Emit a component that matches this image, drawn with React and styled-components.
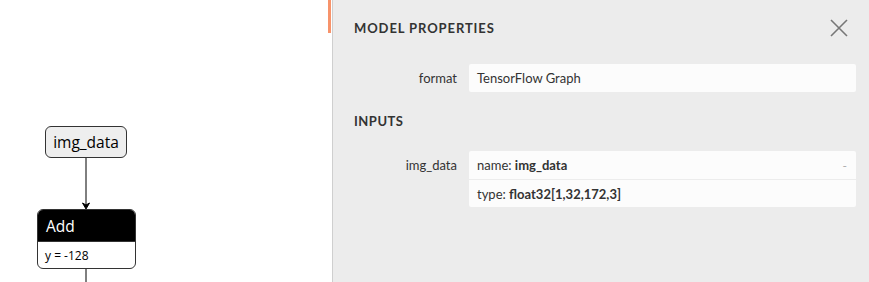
import React from 'react';
import styled, { createGlobalStyle } from 'styled-components';

const GlobalStyle = createGlobalStyle`
  html, body {
    margin: 0;
    padding: 0;
    background: #ffffff;
  }
  body {
    font-family: "Lato", "Open Sans", sans-serif;
    width: 869px;
    height: 282px;
    overflow: hidden;
  }
`;

const Page = styled.div`
  display: flex;
  width: 869px;
  height: 282px;
`;

const Canvas = styled.div`
  position: relative;
  width: 332px;
  height: 100%;
  background: #ffffff;
  font-family: "Open Sans", "DejaVu Sans", sans-serif;
`;

const Handle = styled.div`
  position: absolute;
  top: 0;
  left: 328px;
  width: 3px;
  height: 33px;
  background: #f7936b;
`;

const Edges = styled.svg`
  position: absolute;
  left: 0;
  top: 0;
`;

const InputNode = styled.div`
  position: absolute;
  left: ${p => p.x}px;
  top: ${p => p.y}px;
  width: 82px;
  height: 32px;
  box-sizing: border-box;
  border: 1px solid #333;
  border-radius: 6px;
  background: #eeeeee;
  display: flex;
  align-items: center;
  justify-content: center;
  font-size: 15.5px;
  color: #000;
`;

const OpNode = styled.div`
  position: absolute;
  left: ${p => p.x}px;
  top: ${p => p.y}px;
  width: 99px;
  box-sizing: border-box;
  border: 1px solid #333;
  border-radius: 6px;
  overflow: hidden;
  background: #fff;
`;

const OpTitle = styled.div`
  height: 31px;
  background: #000;
  color: #fff;
  font-size: 15.5px;
  display: flex;
  align-items: center;
  padding-left: 8px;
`;

const OpAttr = styled.div`
  height: 26px;
  border-top: 1px solid #333;
  font-size: 12px;
  color: #000;
  display: flex;
  align-items: center;
  padding-left: 7px;
`;

const Sidebar = styled.div`
  flex: 1;
  background: #ececec;
  border-left: 1px solid #cfcfcf;
  display: flex;
  flex-direction: column;
  padding: 0 13px 0 21px;
  color: #333;
`;

const Header = styled.div`
  display: flex;
  align-items: center;
  justify-content: space-between;
  height: 56px;
`;

const Title = styled.div`
  font-size: 13px;
  font-weight: 700;
  letter-spacing: 0.9px;
  color: #333;
`;

const Close = styled.button`
  background: none;
  border: none;
  padding: 0;
  margin-right: 7px;
  width: 20px;
  height: 20px;
  display: flex;
  cursor: pointer;
`;

const Section = styled.div`
  font-size: 13px;
  font-weight: 700;
  letter-spacing: 0.5px;
  color: #333;
  margin: 21px 0 22px;
`;

const Row = styled.div`
  display: grid;
  grid-template-columns: 103px 1fr;
  column-gap: 12px;
  align-items: start;
  margin-top: ${p => p.top || 0}px;
`;

const Label = styled.div`
  text-align: right;
  font-size: 13px;
  color: #333;
  line-height: 28px;
`;

const ValueBox = styled.div`
  background: #fcfcfc;
  border-radius: 2px;
  display: flex;
  flex-direction: column;
`;

const ValueLine = styled.div`
  height: 28px;
  box-sizing: border-box;
  display: flex;
  align-items: center;
  justify-content: space-between;
  padding: 0 9px 0 8px;
  font-size: 13px;
  color: #333;
  border-top: ${p => (p.divided ? '1px solid #ececec' : 'none')};
  b {
    font-weight: 700;
  }
`;

const Dash = styled.span`
  color: #aaa;
  font-size: 12px;
`;

export default function App() {
  return (
    <>
      <GlobalStyle />
      <Page>
        <Canvas>
          <Edges width="332" height="282">
            <line x1="86" y1="157" x2="86" y2="205" stroke="#000" strokeWidth="1" />
            <path d="M82.5 203 L86 209 L89.5 203 L86 205 Z" fill="#000" stroke="#000" strokeWidth="1" />
            <line x1="86" y1="268" x2="86" y2="282" stroke="#000" strokeWidth="1" />
          </Edges>
          <InputNode x={45} y={126}>img_data</InputNode>
          <OpNode x={37} y={209}>
            <OpTitle>Add</OpTitle>
            <OpAttr>y = -128</OpAttr>
          </OpNode>
          <Handle />
        </Canvas>
        <Sidebar>
          <Header>
            <Title>MODEL PROPERTIES</Title>
            <Close aria-label="close">
              <svg width="20" height="20" viewBox="0 0 20 20">
                <path d="M2 2 L18 18 M18 2 L2 18" stroke="#777" strokeWidth="1.6" />
              </svg>
            </Close>
          </Header>
          <Row top={8}>
            <Label>format</Label>
            <ValueBox>
              <ValueLine>TensorFlow Graph</ValueLine>
            </ValueBox>
          </Row>
          <Section>INPUTS</Section>
          <Row>
            <Label>img_data</Label>
            <ValueBox>
              <ValueLine>
                <span>name: <b>img_data</b></span>
                <Dash>-</Dash>
              </ValueLine>
              <ValueLine divided>
                <span>type: <b>float32[1,32,172,3]</b></span>
              </ValueLine>
            </ValueBox>
          </Row>
        </Sidebar>
      </Page>
    </>
  );
}
